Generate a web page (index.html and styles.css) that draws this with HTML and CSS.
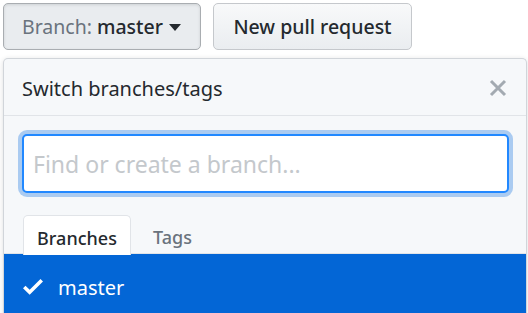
FILE: index.html
```html
<!DOCTYPE html>
<html>
<head>
<meta charset="utf-8">
<link rel="stylesheet" href="styles.css">
</head>
<body>
<div class="toolbar">
  <button class="btn btn-branch"><span class="lbl">Branch:</span> <span class="val">master</span><span class="caret"></span></button>
  <button class="btn">New pull request</button>
</div>
<div class="panel">
  <div class="panel-header">
    <span class="title">Switch branches/tags</span>
    <svg class="close" width="18" height="18" viewBox="0 0 18 18"><path d="M2 2L16 16M16 2L2 16" stroke="#a3aab1" stroke-width="3" fill="none"/></svg>
  </div>
  <div class="filter">
    <input class="input" type="text" placeholder="Find or create a branch...">
  </div>
  <div class="tabs">
    <div class="tab active">Branches</div>
    <div class="tab">Tags</div>
  </div>
  <div class="row">
    <svg class="check" width="20" height="27" viewBox="0 0 12 16"><path fill="#fff" d="M12 5l-8 8-4-4 1.5-1.5L4 10l6.5-6.5L12 5z"/></svg>
    <span>master</span>
  </div>
</div>
</body>
</html>
```
FILE: styles.css
```css
* { box-sizing: border-box; }
html, body { margin: 0; padding: 0; background: #fff; }
body {
  font-family: "Segoe UI", "Noto Sans", "Open Sans", sans-serif;
  color: #24292e;
  overflow: hidden;
}
.toolbar {
  display: flex;
  gap: 12px;
  padding: 3px 0 0 3px;
}
.btn {
  height: 47px;
  width: 199px;
  border: 1px solid #c5c8cc;
  border-radius: 5px;
  background: linear-gradient(#f8f9fa, #eaedf0);
  font-family: inherit;
  font-size: 19.5px;
  font-weight: 500;
  color: #24292e;
  padding: 0;
  display: flex;
  align-items: center;
  justify-content: center;
}
.btn-branch {
  width: 198px;
  background: #e9ecef;
  border-color: #a9adb1;
  box-shadow: inset 0 1px 3px rgba(27,31,35,.12);
  justify-content: flex-start;
  padding-left: 18px;
}
.btn-branch .lbl { color: #6a737d; font-weight: 400; margin-right: 5px; }
.caret {
  width: 0; height: 0;
  border-left: 6.5px solid transparent;
  border-right: 6.5px solid transparent;
  border-top: 7px solid #24292e;
  margin-left: 6px;
  margin-top: 2px;
}
.panel {
  margin: 8px 0 0 3px;
  width: 524px;
  height: 260px;
  background: #f6f8fa;
  border: 1px solid #d1d5da;
  border-bottom: none;
  border-radius: 5px 5px 0 0;
  box-shadow: 0 1px 5px rgba(27,31,35,.15);
}
.panel-header {
  height: 57px;
  display: flex;
  align-items: center;
  justify-content: space-between;
  padding: 0 19px 0 18px;
  border-bottom: 1px solid #e1e4e8;
}
.title { font-size: 20px; font-weight: 400; color: #24292e; margin-top: 3px; }
.close { margin-top: 2px; }
.filter { padding: 18px 17px 21px 18px; }
.input {
  display: block;
  width: 100%;
  height: 59px;
  border: 2px solid #2188ff;
  border-radius: 5px;
  box-shadow: 0 0 0 4px #aacbf1;
  outline: none;
  background: #fff;
  font-family: inherit;
  font-size: 23px;
  padding: 0 9px;
  color: #24292e;
}
.input::placeholder { color: #c4c8cc; }
.tabs {
  display: flex;
  padding-left: 19px;
  height: 39px;
  border-bottom: 1px solid #e1e4e8;
  margin-top: 1px;
}
.tab {
  height: 39px;
  padding: 0 21px;
  display: flex;
  align-items: center;
  font-size: 18px;
  font-weight: 500;
  color: #6a737d;
  border: 1px solid transparent;
  border-bottom: none;
  padding-top: 4px;
}
.tab.active {
  width: 108px;
  height: 40px;
  padding: 4px 0 0;
  justify-content: center;
  background: #fff;
  color: #24292e;
  border-color: #e1e4e8;
  border-radius: 5px 5px 0 0;
}
.row {
  height: 60px;
  background: #0366d6;
  color: #fff;
  display: flex;
  align-items: center;
  padding-left: 19px;
  font-size: 20px;
  padding-top: 6px;
}
.check { margin-right: 15px; margin-top: -2px; }
```
